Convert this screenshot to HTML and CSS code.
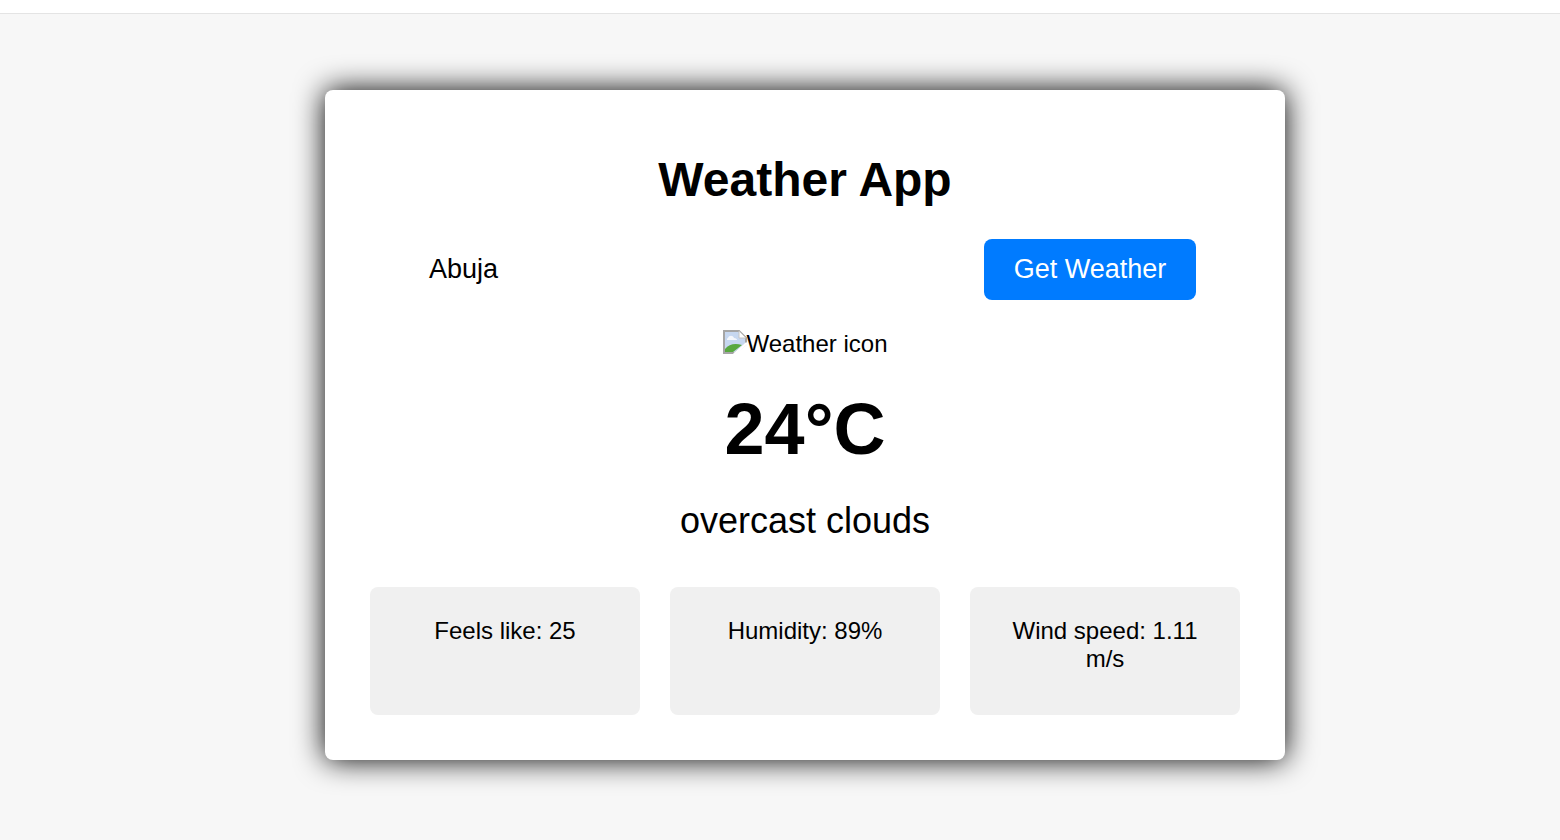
FILE: index.html
```html
<!DOCTYPE html>
<html lang="en">
<head>
<meta charset="utf-8">
<title>Weather App</title>
<link rel="stylesheet" href="styles.css">
</head>
<body>
<div class="topbar"></div>
<main class="page">
  <section class="card">
    <h1 class="title">Weather App</h1>
    <div class="search">
      <div class="city">Abuja</div>
      <button class="go" type="button">Get Weather</button>
    </div>
    <div class="icon-row">
      <svg class="broken" viewBox="0 0 24 24" width="24" height="24" aria-hidden="true">
        <path d="M1 1H16L23 8V14L12 23H1Z" fill="#c6d7f0" stroke="#a5a5a5" stroke-width="2"/>
        <path d="M16 1V8H23Z" fill="#fff" stroke="#c4c4c4" stroke-width="1"/>
        <path d="M5 8c1-3 5-3 6 0c2 0 3 1 3 2H4c0-1 0-2 1-2Z" fill="#f4f7fc"/>
        <path d="M2 22V19C6 14 12 13 19 15L10 22Z" fill="#58a83f"/>
        <path d="M11 24.500L24 13" stroke="#fff" stroke-width="2.500"/>
      </svg><span>Weather icon</span>
    </div>
    <div class="temp">24°C</div>
    <p class="desc">overcast clouds</p>
    <div class="details">
      <div class="tile">Feels like: 25</div>
      <div class="tile">Humidity: 89%</div>
      <div class="tile">Wind speed: 1.11 m/s</div>
    </div>
  </section>
</main>
</body>
</html>
```
FILE: styles.css
```css
* { box-sizing: border-box; }
html, body { margin: 0; height: 100%; }
body {
  background: #f7f7f7;
  color: #000;
  font-family: "Liberation Sans", Arial, sans-serif;
  overflow: hidden;
}
.topbar {
  height: 14px;
  background: #fff;
  border-bottom: 1px solid #e4e4e4;
}
.page { padding: 76px 0 0 325px; }
.card {
  width: 960px;
  height: 670px;
  padding: 61px 45px 45px;
  background: #fff;
  border-radius: 8px;
  box-shadow: 0 0 30px #000;
  text-align: center;
}
.title {
  margin: 0 0 30px;
  font-size: 48px;
  line-height: 58px;
  font-weight: 700;
}
.search {
  display: flex;
  justify-content: center;
  height: 61px;
}
.city {
  width: 570px;
  padding: 0 15px;
  font-size: 27px;
  line-height: 60px;
  text-align: left;
}
.go {
  width: 212px;
  border: 0;
  border-radius: 8px;
  background: #007bff;
  color: #fff;
  font: 27px "Liberation Sans", Arial, sans-serif;
}
.icon-row {
  display: flex;
  justify-content: center;
  align-items: center;
  height: 28px;
  margin-top: 30px;
  font-size: 24px;
}
.broken {
  display: block;
  align-self: flex-start;
}
.temp {
  margin-top: 29px;
  font-size: 72px;
  line-height: 84px;
  font-weight: 700;
}
.desc {
  margin: 29px 0 0;
  font-size: 36px;
  line-height: 42px;
}
.details {
  display: flex;
  gap: 30px;
  margin-top: 45px;
}
.tile {
  flex: 1;
  height: 128px;
  padding: 30px;
  background: #f0f0f0;
  border-radius: 8px;
  font-size: 24px;
  line-height: 28px;
}
```
